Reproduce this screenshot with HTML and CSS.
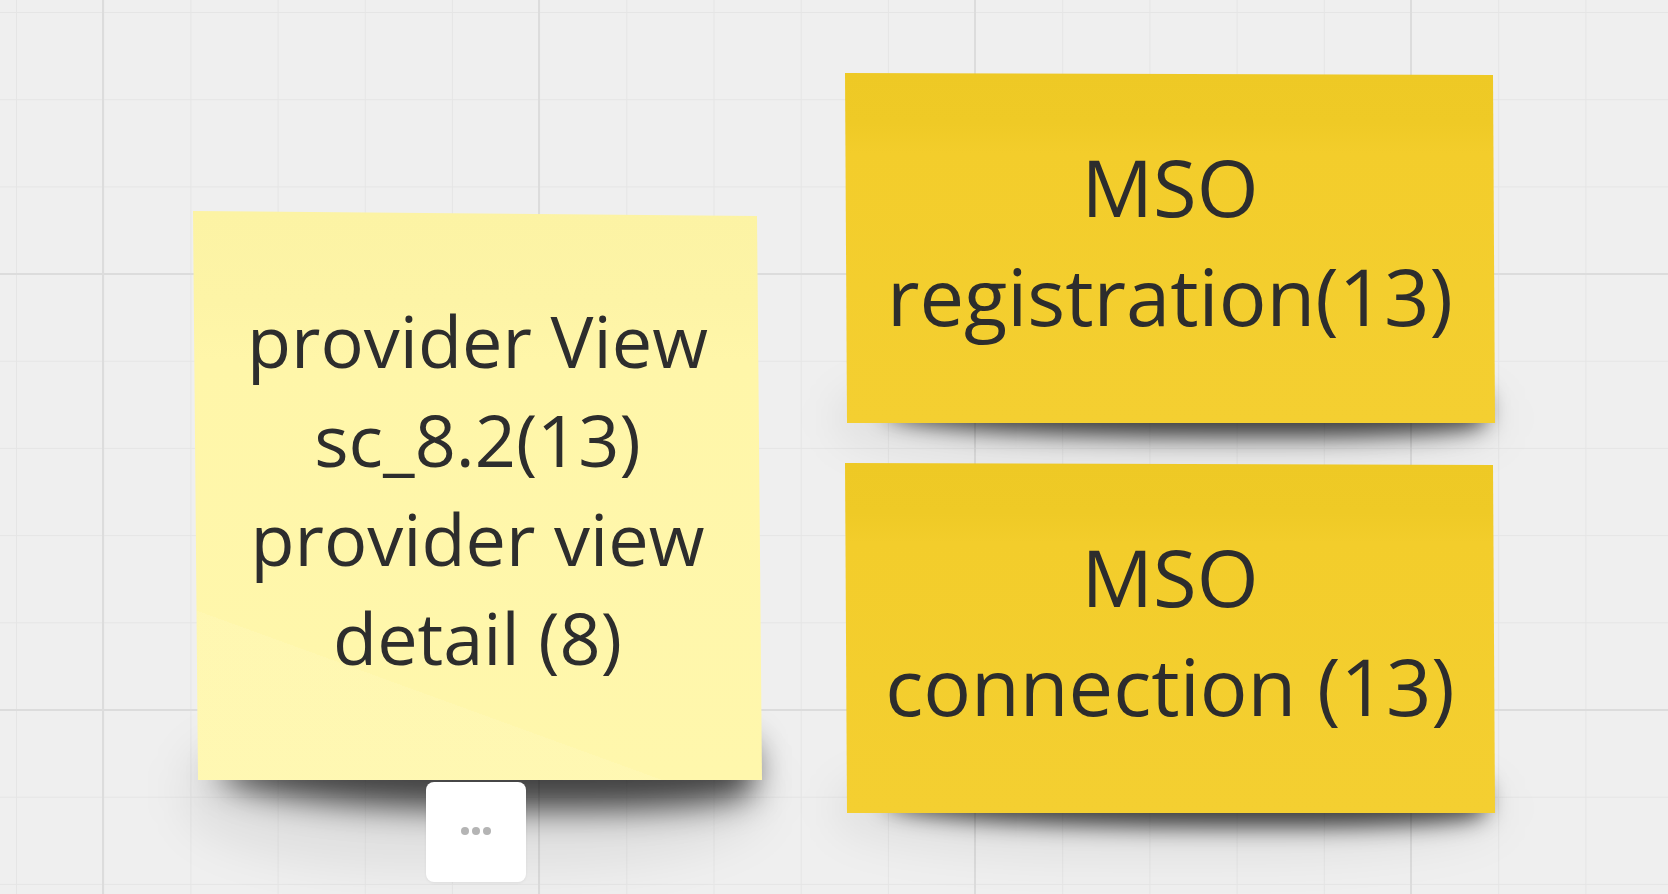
FILE: index.html
```html
<!DOCTYPE html>
<html lang="en">
<head>
  <meta charset="UTF-8">
  <meta name="viewport" content="width=device-width, initial-scale=1.0">
  <title>Board</title>
  <link rel="stylesheet" href="styles.css">
</head>
<body>
  <div class="board">
    <div class="sticker sticker-provider">
      <div class="sticker-paper paper-light">
        <p class="sticker-text">provider View<br>sc_8.2(13)<br>provider view<br>detail (8)</p>
      </div>
    </div>

    <button class="more-button" title="More">
      <span class="dot"></span><span class="dot"></span><span class="dot"></span>
    </button>

    <div class="sticker sticker-registration">
      <div class="sticker-paper paper-yellow">
        <p class="sticker-text big">MSO<br>registration(13)</p>
      </div>
    </div>

    <div class="sticker sticker-connection">
      <div class="sticker-paper paper-yellow">
        <p class="sticker-text big">MSO<br>connection (13)</p>
      </div>
    </div>
  </div>
</body>
</html>
```

FILE: styles.css
```css
html, body {
  margin: 0;
  height: 100%;
}
body {
  font-family: 'Open Sans', 'Noto Sans', sans-serif;
  overflow: hidden;
  background-color: #efefef;
  background-image:
    linear-gradient(to right, #dcdcdc 2px, transparent 2px),
    linear-gradient(to bottom, #dcdcdc 2px, transparent 2px),
    linear-gradient(to right, #e5e5e5 1px, transparent 1px),
    linear-gradient(to bottom, #e5e5e5 1px, transparent 1px);
  background-size: 436px 100%, 100% 436px, 87.2px 100%, 100% 87.2px;
  background-position: 102px 0, 0 273px, 16px 0, 0 12px;
}
.board {
  position: relative;
  width: 1668px;
  height: 894px;
}

/* stickies */
.sticker {
  position: absolute;
  z-index: 1;
}
.sticker::before {
  content: '';
  position: absolute;
  z-index: -1;
  left: 26px;
  right: 8px;
  bottom: -30px;
  height: 70px;
  background: rgba(0, 0, 0, 0.7);
  border-radius: 50% 10% 35% 60%;
  filter: blur(16px);
}
.sticker::after {
  content: '';
  position: absolute;
  z-index: -2;
  left: -10px;
  right: -5px;
  bottom: -90px;
  height: 160px;
  background: rgba(0, 0, 0, 0.06);
  border-radius: 40%;
  filter: blur(20px);
}
.sticker-paper {
  position: relative;
  width: 100%;
  height: 100%;
  display: flex;
  align-items: center;
  justify-content: center;
  box-sizing: border-box;
  padding-bottom: 14px;
}
.paper-light {
  background:
    linear-gradient(200deg, transparent 78%, rgba(255, 255, 255, 0.08) 78%),
    linear-gradient(to bottom, #fcf3a4 0, #fdf4a6 90px, #fff6a9 150px, #fff7ac 100%);
  clip-path: polygon(0 0, calc(100% - 5px) 5px, 100% 100%, 5px 100%);
}
.paper-yellow {
  background:
    linear-gradient(to bottom, #eec925 0, #efca26 50px, #f3cd2b 80px, #f4cf31 100%);
  clip-path: polygon(0 0, calc(100% - 2px) 2px, 100% 100%, 2px 100%);
}
.sticker-text {
  margin: 0;
  text-align: center;
  color: #2d2d2d;
  font-size: 72px;
  line-height: 99px;
}
.sticker-text.big {
  font-size: 79.5px;
  line-height: 109px;
}

.sticker-provider {
  left: 193px;
  top: 211px;
  width: 569px;
  height: 569px;
}
.sticker-registration {
  left: 845px;
  top: 73px;
  width: 650px;
  height: 350px;
}
.sticker-connection {
  left: 845px;
  top: 463px;
  width: 650px;
  height: 350px;
}
.sticker-registration::before,
.sticker-connection::before {
  left: 40px;
  right: 10px;
  bottom: -14px;
  height: 46px;
  background: rgba(0, 0, 0, 0.72);
  filter: blur(11px);
}
.sticker-registration::after,
.sticker-connection::after {
  bottom: -45px;
  height: 100px;
}

/* context button under the selected sticky */
.more-button {
  position: absolute;
  z-index: 2;
  left: 426px;
  top: 782px;
  width: 100px;
  height: 100px;
  border: none;
  border-radius: 8px;
  background: #fff;
  box-shadow: 0 1px 3px rgba(0, 0, 0, 0.06);
  display: flex;
  align-items: center;
  justify-content: center;
  gap: 3px;
  padding: 0 0 2px 0;
  cursor: pointer;
}
.dot {
  width: 8px;
  height: 8px;
  border-radius: 50%;
  background: #b4b4b4;
}
```
